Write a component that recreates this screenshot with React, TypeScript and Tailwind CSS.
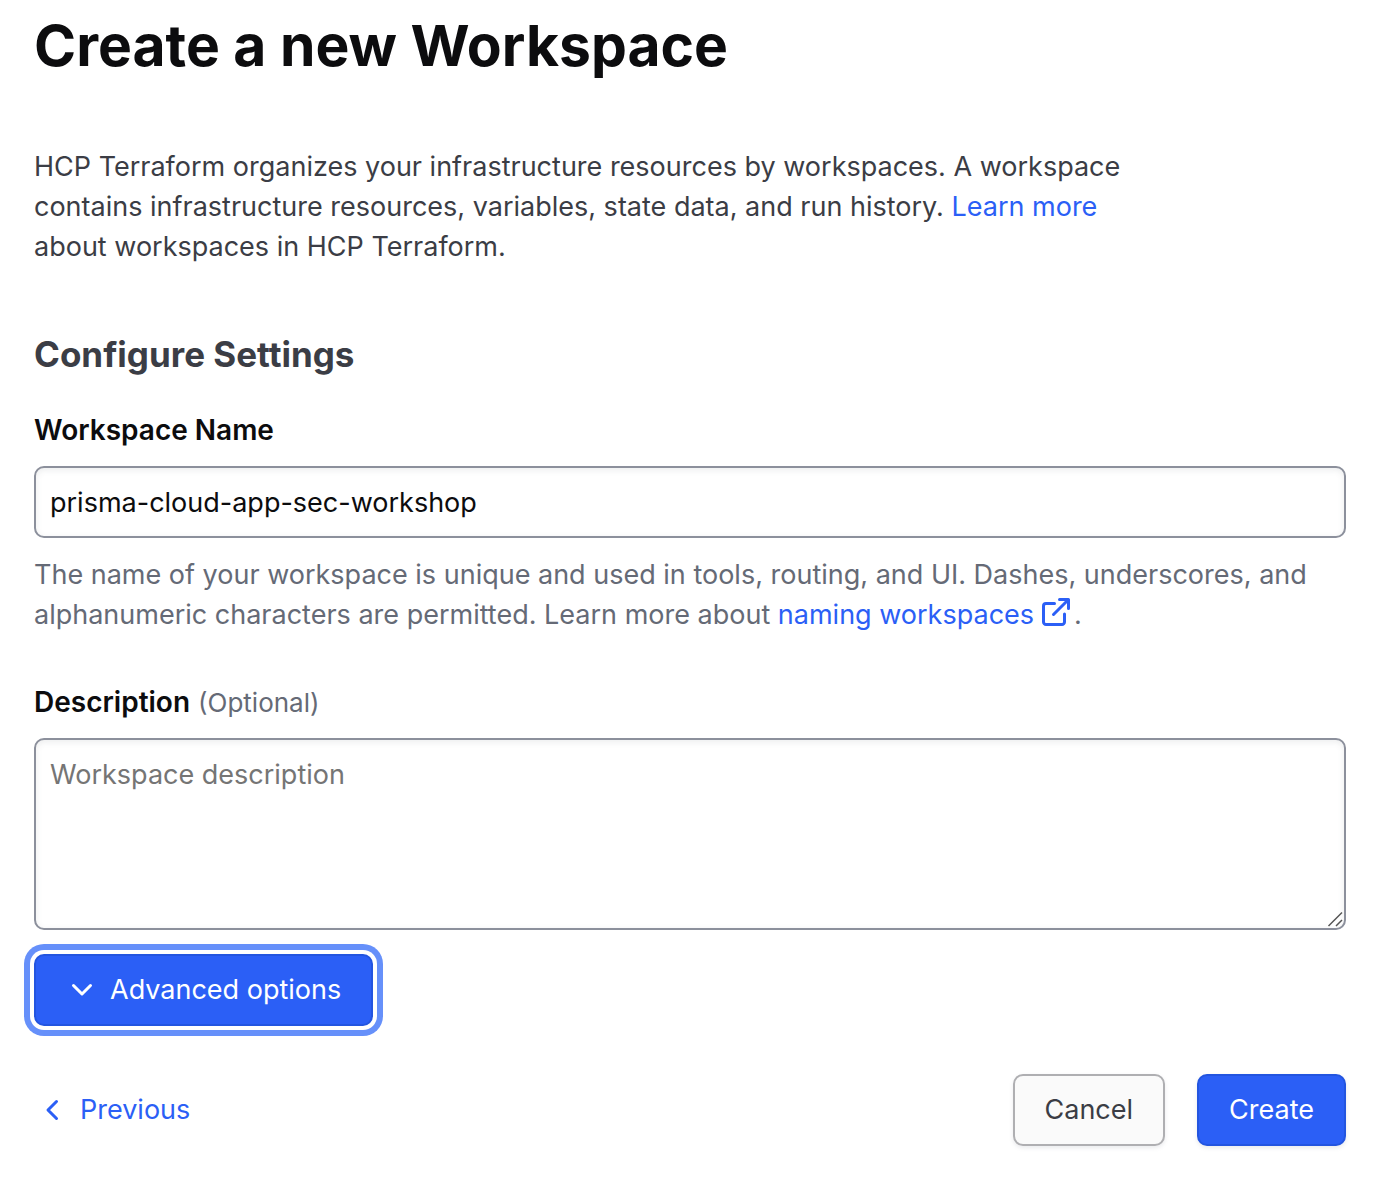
import React from 'react';

function ExternalLinkIcon() {
  return (
    <svg
      viewBox="0 0 32 32"
      className="mr-0.5 ml-1.5 inline h-8 w-8 align-[-4px]"
      fill="none"
      stroke="currentColor"
      strokeWidth="3"
      strokeLinecap="round"
      strokeLinejoin="round"
      aria-hidden="true"
    >
      <path d="M14.5 7.5H6A2.5 2.5 0 0 0 3.5 10v16A2.5 2.5 0 0 0 6 28.5h16a2.5 2.5 0 0 0 2.5-2.5v-8" />
      <path d="M19.5 3.5h9v9M28 4L13.5 18.5" />
    </svg>
  );
}

function Chevron({ d }: { d: string }) {
  return (
    <svg
      viewBox="0 0 32 32"
      className="h-8 w-8 shrink-0"
      fill="none"
      stroke="currentColor"
      strokeWidth="3"
      strokeLinecap="round"
      strokeLinejoin="round"
      aria-hidden="true"
    >
      <path d={d} />
    </svg>
  );
}

export default function App() {
  return (
    <main className="min-h-screen bg-white pt-2 pr-[50px] pb-[38px] pl-[34px] font-['Inter',sans-serif] text-[27px] leading-[40px] text-[#3b3d45]">
      <h1 className="text-[57px] leading-[76px] font-bold text-[#0c0c0e]">Create a new Workspace</h1>
      <p className="mt-[63px] max-w-[1120px]">
        HCP Terraform organizes your infrastructure resources by workspaces. A workspace contains infrastructure
        resources, variables, state data, and run history.{' '}
        <a href="#learn" className="text-[#2b5ff6]">Learn more</a> about workspaces in HCP Terraform.
      </p>
      <form onSubmit={(e) => e.preventDefault()}>
        <h2 className="mt-[63px] text-[35px] leading-[48px] font-bold">Configure Settings</h2>
        <label htmlFor="name" className="mt-8 block text-[28px] font-semibold text-[#0c0c0e]">Workspace Name</label>
        <input
          id="name"
          type="text"
          defaultValue="prisma-cloud-app-sec-workshop"
          className="mt-4 block h-[72px] w-full rounded-[10px] border-2 border-[#8c909c] bg-white px-3.5 text-[#0c0c0e] shadow-[inset_0_2px_6px_#656a761f] outline-none"
        />
        <p className="mt-[17px] text-[#656a76]">
          The name of your workspace is unique and used in tools, routing, and UI. Dashes, underscores, and
          alphanumeric characters are permitted. Learn more about{' '}
          <a href="#naming" className="text-[#2b5ff6]">naming workspaces<ExternalLinkIcon /></a>.
        </p>
        <label htmlFor="description" className="mt-[47px] flex h-10 items-baseline gap-2 text-[28px] font-semibold text-[#0c0c0e]">
          Description <span className="text-[26px] font-normal text-[#656a76]">(Optional)</span>
        </label>
        <div className="relative mt-4">
          <textarea
            id="description"
            placeholder="Workspace description"
            className="block h-48 w-full rounded-[10px] border-2 border-[#8c909c] bg-white px-3.5 py-[15px] shadow-[inset_0_2px_6px_#656a761f] outline-none placeholder:text-[#757575] [&::-webkit-resizer]:hidden"
          />
          <svg viewBox="0 0 16 16" className="pointer-events-none absolute right-[3px] bottom-[3px] h-4 w-4" fill="none" stroke="#555" strokeWidth="1.5" aria-hidden="true">
            <path d="M1.500 15L15 1.500M9 15L15 9" />
          </svg>
        </div>
        <button
          type="button"
          className="mt-6 flex h-[72px] items-center gap-3 rounded-[10px] border-2 border-[#2355e0] bg-[#2b5ff6] px-[30px] text-white shadow-[0_0_0_4px_#fff,0_0_0_10px_#6690fa] outline-none"
        >
          <Chevron d="M7.5 11.5L16 20l8.500-8.500" />
          Advanced options
        </button>
        <div className="mt-12 flex items-center justify-between">
          <button type="button" className="flex h-[72px] items-center gap-3 px-0.5 text-[#2b5ff6]">
            <Chevron d="M20.500 7.500L12 16l8.500 8.500" />
            Previous
          </button>
          <div className="flex gap-8">
            <button type="button" className="h-[72px] rounded-[10px] border-2 border-[#afafb2] bg-[#fafafa] px-[30px] shadow-[0_2px_4px_#656a7622]">
              Cancel
            </button>
            <button type="submit" className="h-[72px] rounded-[10px] border-2 border-[#2355e0] bg-[#2b5ff6] px-[30px] text-white shadow-[0_2px_4px_#656a7622]">
              Create
            </button>
          </div>
        </div>
      </form>
    </main>
  );
}
